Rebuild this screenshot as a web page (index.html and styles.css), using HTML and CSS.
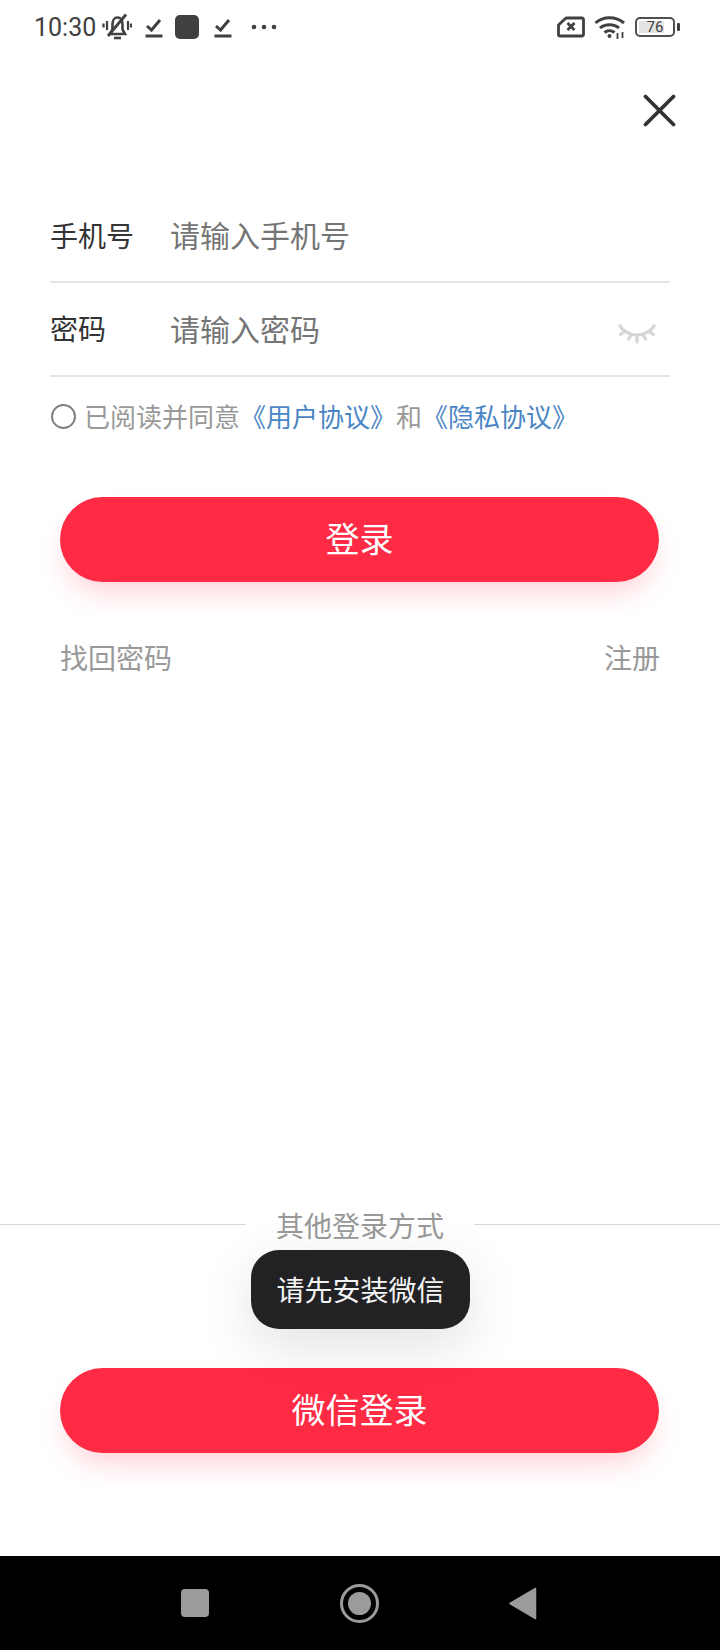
FILE: index.html
```html
<!DOCTYPE html>
<html lang="zh-CN">
<head>
<meta charset="utf-8">
<title>登录</title>
<link rel="stylesheet" href="styles.css">
</head>
<body>
<div class="page">
  <header class="status">
    <div class="status-left">
      <span class="time">10:30</span>
      <svg class="ic-bell" width="30" height="28" viewBox="0 0 30 28" fill="none" stroke="#404040" stroke-width="2.600">
        <path d="M8 21h15l-2.500-4.500V11c0-3.500-2-6.500-5-6.500s-5 3-5 6.500v5.500z"/><path d="M12 25h7" stroke-width="2.600"/><path d="M6 23 24 1.500" stroke-width="2.800"/>
        <path d="M5 8v9M1.500 10.500v4M26 8v9M29 10.500v4" stroke-width="2.200"/>
      </svg>
      <svg class="ic-check" width="18" height="21" viewBox="0 0 18 21" fill="none" stroke="#404040"><path d="M2 9l4.500 4L15 3" stroke-width="3"/><path d="M0.500 19h17" stroke-width="3"/></svg>
      <span class="app-square"></span>
      <svg class="ic-check" width="18" height="21" viewBox="0 0 18 21" fill="none" stroke="#404040"><path d="M2 9l4.500 4L15 3" stroke-width="3"/><path d="M0.500 19h17" stroke-width="3"/></svg>
      <svg class="ic-dots" width="26" height="6" viewBox="0 0 26 6" fill="#404040"><circle cx="3" cy="3" r="2.300"/><circle cx="13" cy="3" r="2.300"/><circle cx="23" cy="3" r="2.300"/></svg>
    </div>
    <div class="status-right">
      <svg width="28" height="22" viewBox="0 0 28 22" fill="none" stroke="#404040"><path d="M9 2h16a1.500 1.500 0 0 1 1.500 1.500v15a1.500 1.500 0 0 1-1.500 1.500H3a1.500 1.500 0 0 1-1.500-1.500V9z" stroke-width="2.800" stroke-linejoin="round"/><path d="M10.500 7l7 7M17.500 7l-7 7" stroke-width="2.800"/></svg>
      <svg width="32" height="24" viewBox="0 0 32 24" fill="none" stroke="#404040" stroke-width="3"><path d="M1.500 8C9 1 22 1 30 8"/><path d="M6 13c5-4.500 14-4.500 19 0"/><path d="M10.500 17.500c3-2.500 7-2.500 10 0"/><circle cx="15.500" cy="21" r="2" fill="#404040" stroke="none"/><path d="M23.500 18v6M28.500 17v6" stroke-width="1.800"/></svg>
      <div class="battery-wrap">
        <div class="battery"><span class="battery-fill"></span><span class="battery-num">76</span></div>
        <span class="battery-nub"></span>
      </div>
    </div>
  </header>

  <div class="close-row">
    <svg width="33" height="33" viewBox="0 0 33 33" fill="none" stroke="#333" stroke-width="3.800" stroke-linecap="round"><path d="M2.500 2.500l28 28M30.500 2.500l-28 28"/></svg>
  </div>

  <form class="form">
    <div class="field">
      <span class="label">手机号</span>
      <span class="placeholder">请输入手机号</span>
    </div>
    <div class="field field-pwd">
      <span class="label">密码</span>
      <span class="placeholder">请输入密码</span>
      <svg class="eye" width="38" height="21" viewBox="0 0 38 21" fill="none" stroke="#d6d6d6" stroke-width="3.200" stroke-linecap="round"><path d="M2 2c2 4 9 9 17 9s15-5 17-9"/><path d="M6 8 2.500 10.500M13 11l-2.500 4M19 12v6M25 11l2.500 4M32 8l3.500 2.500"/></svg>
    </div>
    <div class="agree">
      <span class="radio"></span>
      <span class="agree-text">已阅读并同意<a class="link">《用户协议》</a>和<a class="link">《隐私协议》</a></span>
    </div>
  </form>

  <div class="actions">
    <button class="btn" type="button">登录</button>
    <div class="links"><span>找回密码</span><span>注册</span></div>
  </div>

  <div class="other">
    <div class="divider"><span>其他登录方式</span></div>
    <button class="btn btn-wechat" type="button">微信登录</button>
  </div>

  <div class="toast">请先安装微信</div>

  <nav class="navbar">
    <span class="nav-square"></span>
    <span class="nav-home"><span class="nav-dot"></span></span>
    <svg width="28" height="33" viewBox="0 0 28 33" fill="#9b9b9b"><path d="M26.500 1.500v30L1 16.500z" stroke="#9b9b9b" stroke-width="1.500" stroke-linejoin="round"/></svg>
  </nav>
</div>
</body>
</html>
```

FILE: styles.css
```css
* { box-sizing: border-box; }
html, body { margin: 0; padding: 0; background: #fff; }
body { font-family: "Noto Sans CJK SC", "Liberation Sans", sans-serif; }
.page { position: relative; width: 720px; height: 1650px; display: flex; flex-direction: column; overflow: hidden; background: #fff; }

.status { height: 54px; padding: 0 40px 0 34px; display: flex; justify-content: space-between; align-items: center; color: #404040; flex: none; }
.status-left { display: flex; align-items: center; }
.time { font-family: Roboto, sans-serif; font-size: 25px; width: 68px; padding-top: 1px; }
.ic-bell { margin-right: 13px; }
.ic-check { margin-right: 12px; }
.app-square { width: 24px; height: 24px; border-radius: 5px; background: #404040; margin-right: 15px; }
.ic-dots { margin-left: 7px; }
.status-right { display: flex; align-items: center; gap: 9px; }
.battery-wrap { display: flex; align-items: center; gap: 2px; }
.battery { position: relative; width: 40px; height: 20px; border: 2px solid #505050; border-radius: 5px; display: flex; align-items: center; justify-content: center; }
.battery-fill { position: absolute; left: 2px; top: 2px; bottom: 2px; width: 25px; background: #e4e4e4; }
.battery-num { position: relative; font-family: Roboto, sans-serif; font-size: 15px; line-height: 1; color: #404040; }
.battery-nub { width: 3px; height: 8px; background: #404040; border-radius: 1px; }

.close-row { flex: none; height: 136px; display: flex; justify-content: flex-end; align-items: flex-start; padding: 40px 44px 0 0; }

.form { flex: none; margin: 0 50px; }
.field { height: 93px; border-bottom: 2px solid #e5e5e5; display: flex; align-items: center; position: relative; }
.field-pwd { height: 94px; }
.label { width: 121px; font-size: 28px; color: #333; padding-bottom: 2px; }
.placeholder { font-size: 30px; color: #757575; padding-bottom: 3px; margin-left: -1px; }
.eye { position: absolute; right: 14px; top: 41px; }
.agree { height: 77px; display: flex; align-items: center; padding-top: 2px; }
.radio { width: 25px; height: 25px; border: 2.500px solid #808080; border-radius: 50%; margin-right: 8px; flex: none; margin-left: 1px; }
.agree-text { font-size: 26px; color: #999; white-space: nowrap; padding-bottom: 3px; }
.link { color: #4a86c5; }

.actions { flex: none; margin: 43px 60px 0; }
.btn { display: block; width: 599px; height: 85px; border: 0; border-radius: 43px; background: #ff2a44; color: #fff; font-family: inherit; font-size: 34px; padding: 0 0 4px; box-shadow: 0 16px 30px -8px rgba(255, 42, 68, 0.24); }
.links { display: flex; justify-content: space-between; margin-top: 53px; font-size: 28px; line-height: 44px; color: #999; }

.other { margin-top: auto; flex: none; padding-bottom: 103px; }
.divider { position: relative; height: 44px; display: flex; align-items: center; justify-content: center; }
.divider::before { content: ""; position: absolute; left: 0; right: 0; top: 21px; height: 1px; background: #d8d8d8; }
.divider span { position: relative; background: #fff; padding: 0 30px; font-size: 28px; line-height: 44px; color: #999; }
.btn-wechat { margin: 121px 0 0 60px; }

.toast { position: absolute; left: 251px; top: 1250px; width: 219px; height: 79px; border-radius: 28px; background: #222224; color: #f5f5f5; font-size: 28px; padding-bottom: 2px; display: flex; align-items: center; justify-content: center; box-shadow: 0 16px 56px rgba(0, 0, 0, 0.12); }

.navbar { flex: none; height: 94px; background: #000; display: flex; align-items: center; justify-content: space-between; padding: 0 183px 0 181px; }
.nav-square { width: 28px; height: 28px; border-radius: 4px; background: #9b9b9b; }
.nav-home { width: 39px; height: 39px; border: 3px solid #9b9b9b; border-radius: 50%; display: flex; align-items: center; justify-content: center; }
.nav-dot { width: 23px; height: 23px; border-radius: 50%; background: #9b9b9b; }
```
